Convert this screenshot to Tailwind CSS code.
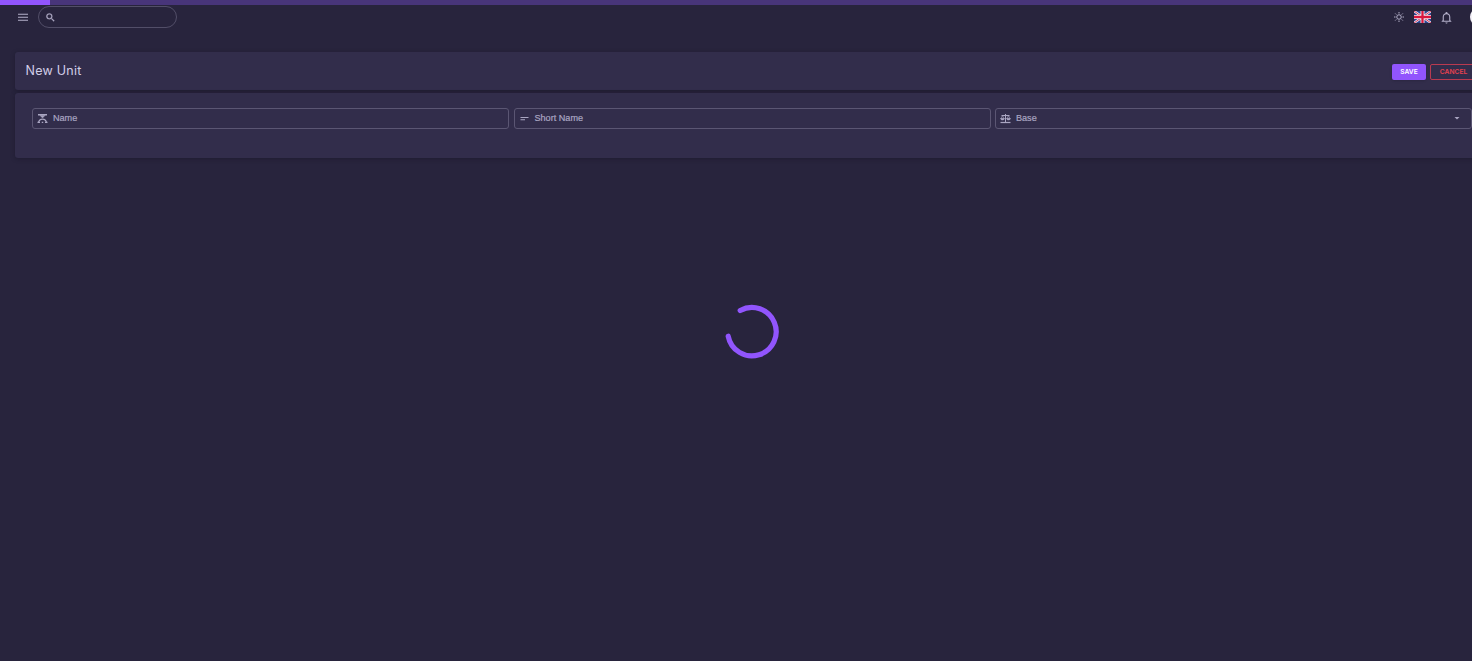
<!DOCTYPE html>
<html lang="en">
<head>
<meta charset="utf-8">
<title>New Unit</title>
<script src="https://cdn.jsdelivr.net/npm/@tailwindcss/browser@4"></script>
</head>
<body class="relative h-[661px] overflow-hidden bg-[#28243d] font-['Inter',sans-serif] text-[#cfcbe5]">
  <div class="h-[5px] bg-[#48357a]"><div class="h-full w-[50px] bg-[#9155fd]"></div></div>

  <header class="flex h-[24px] w-[1490px] items-center pl-[17px] text-[#b4b0ca]">
    <svg class="size-3 shrink-0" viewBox="0 0 12 12" fill="none" stroke="currentColor" stroke-width="1.1"><path d="M1 3.200h10M1 6.200h10M1 9.200h10"/></svg>
    <div class="ml-[8.500px] flex h-[22px] w-[139px] items-center rounded-full border border-[#524e68] pl-[6px]">
      <svg class="size-[11px]" viewBox="0 0 24 24" fill="currentColor" stroke="currentColor" stroke-width=".6"><path d="M9.500 3A6.500 6.500 0 0 1 16 9.500c0 1.610-.59 3.090-1.560 4.230l.27.270h.79l5 5-1.500 1.500-5-5v-.79l-.27-.27A6.516 6.516 0 0 1 9.500 16a6.500 6.500 0 0 1 0-13m0 2C7 5 5 7 5 9.500S7 14 9.500 14 14 12 14 9.500 12 5 9.500 5"/></svg>
    </div>
    <div class="ml-auto flex w-[97px] shrink-0 items-center">
      <svg class="size-3" viewBox="0 0 24 24" fill="none" stroke="currentColor" stroke-width="2"><circle cx="12" cy="12" r="4.500"/><path d="M12 2v3M12 19v3M2 12h3M19 12h3M4.500 5l2 2M17.500 17l2 2M19.500 5l-2 2M6.500 17l-2 2"/></svg>
      <svg class="ml-[9px] h-[12px] w-[17px]" viewBox="0 0 60 42" preserveAspectRatio="none"><path fill="#2b438f" d="M0 0h60v42H0z"/><path d="M0 0l60 42M60 0L0 42" stroke="#e8e6f0" stroke-width="8"/><path d="M0 0l60 42M60 0L0 42" stroke="#d42043" stroke-width="3"/><path d="M30 0v42M0 21h60" stroke="#eeeaf2" stroke-width="14"/><path d="M30 0v42M0 21h60" stroke="#d9163d" stroke-width="8"/></svg>
      <svg class="ml-[9px] size-[13px]" viewBox="0 0 24 24" fill="currentColor"><path d="M10 21h4c0 1.100-.9 2-2 2s-2-.9-2-2m11-2v1H3v-1l2-2v-6c0-3.100 2-5.800 5-6.700V4a2 2 0 0 1 4 0v.3c3 .9 5 3.600 5 6.700v6zm-4-8a5 5 0 0 0-10 0v7h10z"/></svg>
      <div class="ml-[17px] size-[18px] shrink-0 rounded-full bg-[#f3f0f7]"></div>
    </div>
  </header>

  <main class="ml-[15px] mt-[23px] flex w-[1475px] flex-col gap-[3px]">
    <section class="flex h-[38px] items-center rounded-[3px] bg-[#322d4b] pl-[10.500px] shadow-[0_1px_4px_rgba(20,17,33,0.4)]">
      <h1 class="text-[12.500px] font-normal leading-5 tracking-[0.25px] text-[#d2cee8]">New Unit</h1>
      <div class="ml-auto mr-[12px] mt-[1px] flex gap-1 text-[6.700px] font-semibold">
        <button class="h-[16px] w-[34px] rounded-[2px] bg-[#9155fd] pt-px text-white shadow-sm">SAVE</button>
        <button class="h-[16px] w-[48px] rounded-[2px] border border-[#b93a50] pr-[1px] pt-px text-[#e8414f]">CANCEL</button>
      </div>
    </section>
    <section class="h-[65px] rounded-[3px] bg-[#322d4b] pl-[17px] pt-[15px] shadow-[0_1px_4px_rgba(20,17,33,0.4)]">
      <div class="flex gap-[4.500px] font-['Liberation_Sans',Arial,sans-serif] text-[9.100px] text-[#aaa6c2] [-webkit-text-stroke:0.2px_#aaa6c2]">
        <div class="flex h-[21px] w-[477px] shrink-0 items-center rounded-[3px] border border-[#5b5673] pl-[4px]">
          <svg class="mr-[5px] size-[11px]" viewBox="0 0 22 22" fill="none" stroke="currentColor"><path d="M2 3.500h18" stroke-width="3"/><path d="M6 5l5 5 5-5z" fill="currentColor"/><path d="M3 19c1-5 4-7 8-7s7 2 8 7" stroke-width="2.500"/><path d="M1 18.500h5M16 18.500h5M9.500 18.500h3" stroke-width="2.500"/></svg>
          <span>Name</span>
        </div>
        <div class="flex h-[21px] w-[477px] shrink-0 items-center rounded-[3px] border border-[#5b5673] pl-[4px]">
          <svg class="mr-[5px] size-[11px]" viewBox="0 0 22 22" fill="none" stroke="currentColor" stroke-width="2"><path d="M3 9h16M3 13.500h9"/></svg>
          <span>Short Name</span>
        </div>
        <div class="flex h-[21px] w-[477px] shrink-0 items-center rounded-[3px] border border-[#5b5673] pl-[4px]">
          <svg class="mr-[5px] size-[11px]" viewBox="0 0 22 22" fill="none" stroke="currentColor"><path d="M11 2v16M3 5h16" stroke-width="2"/><path d="M1 19h20" stroke-width="2.500"/><path d="M5 5l-3 7h6zM17 5l-3 7h6z" stroke-width="1.300"/><path d="M1 11h8c-1 4-7 4-8 0M13 11h8c-1 4-7 4-8 0" fill="currentColor"/></svg>
          <span>Base</span>
          <svg class="ml-auto mr-[11px] h-[3px] w-[6px]" viewBox="0 0 6 3"><path d="M.5 0h5L3 2.600z" fill="currentColor"/></svg>
        </div>
      </div>
    </section>
  </main>

  <svg class="absolute left-[722px] top-[301px] size-[60px]" viewBox="0 0 60 60" fill="none"><path d="M18.200 9.500A24.200 24.200 0 1 1 6.200 35.200" stroke="#9155fd" stroke-width="5.200" stroke-linecap="round"/></svg>
</body>
</html>
